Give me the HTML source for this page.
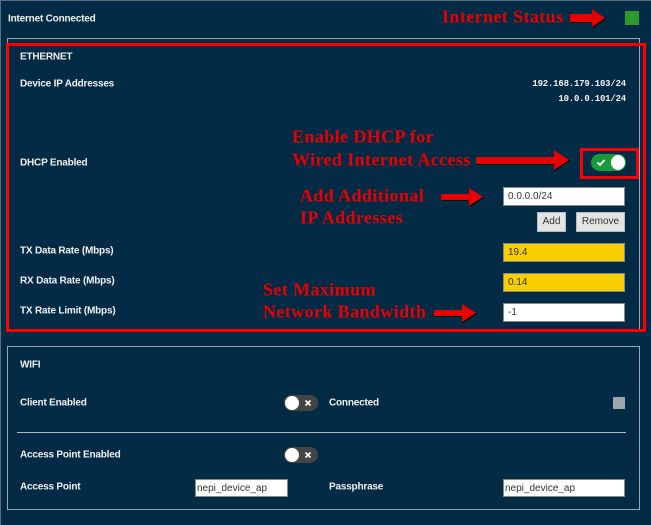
<!DOCTYPE html>
<html><head><style>
body{margin:0;width:651px;height:525px;background:#042b45;position:relative;overflow:hidden;font-family:"Liberation Sans",sans-serif;color:#fff}
.a{position:absolute;white-space:nowrap}
.l{font-size:10px;font-weight:bold;color:#f0f0f0;transform:translateY(-50%);letter-spacing:-0.2px}
.r{font-family:"Liberation Serif",serif;font-weight:bold;color:#e80000;font-size:18px;letter-spacing:0.4px;transform:translateY(-50%)}
.in{position:absolute;background:#fff;border:1px solid #888;box-sizing:border-box;font-size:10px;color:#333;padding-left:4px;line-height:17px}
.y{background:#f7ce00}
.btn{position:absolute;background:#e4e4e4;border:1px solid #bbb;box-sizing:border-box;font-size:10px;color:#333;text-align:center;line-height:18px}
.box{position:absolute;border:1px solid #9aa7b0}
.red{position:absolute;border:3px solid #f00;box-sizing:border-box}
</style></head><body>
<div class="a" style="left:0;top:0;width:1px;height:525px;background:#5a7080"></div>
<div class="a" style="left:0;top:0;width:651px;height:1px;background:#5a7080"></div>
<div class="a l" style="left:8px;top:19px">Internet Connected</div>
<div class="a r" style="left:442px;top:17px">Internet Status</div>
<svg class="a" style="left:568px;top:7px" width="40" height="22"><polygon points="2,7 24,7 24,2 37,11 24,20 24,15 2,15" fill="#000" transform="translate(1,1)"/><polygon points="2,7 24,7 24,2 37,11 24,20 24,15 2,15" fill="#e80000"/></svg>
<div class="a" style="left:625px;top:11px;width:14px;height:14px;background:#2a9a2a"></div>

<div class="box" style="left:7px;top:38px;width:631px;height:292px"></div>
<div class="red" style="left:6px;top:43px;width:640px;height:289px"></div>
<div class="a l" style="left:20px;top:57px">ETHERNET</div>
<div class="a l" style="left:20px;top:84px">Device IP Addresses</div>
<div class="a l" style="right:25px;top:84px;font-family:'Liberation Mono',monospace;font-size:9px">192.168.179.103/24</div>
<div class="a l" style="right:25px;top:99px;font-family:'Liberation Mono',monospace;font-size:9px">10.0.0.101/24</div>
<div class="a r" style="left:292px;top:137px">Enable DHCP for</div>
<div class="a r" style="left:292px;top:160px">Wired Internet Access</div>
<svg class="a" style="left:474px;top:148px" width="100" height="26"><polygon points="2,9 80,9 80,2 95,12 80,22 80,16 2,16" fill="#000" transform="translate(1,1)"/><polygon points="2,9 80,9 80,2 95,12 80,22 80,16 2,16" fill="#e80000"/></svg>
<div class="red" style="left:580px;top:148px;width:59px;height:31px"></div>
<div class="a" style="left:591px;top:154px;width:35px;height:17px;border-radius:9px;background:#1a9a3a"></div>
<div class="a" style="left:611px;top:155px;width:14px;height:15px;border-radius:50%;background:#fff"></div>
<svg class="a" style="left:596px;top:158px" width="10" height="9"><path d="M1.5 4.5 L4 7 L8.5 2" stroke="#fff" stroke-width="1.8" fill="none"/></svg>
<div class="a l" style="left:20px;top:163px">DHCP Enabled</div>
<div class="a r" style="left:300px;top:196px">Add Additional</div>
<div class="a r" style="left:300px;top:218px">IP Addresses</div>
<svg class="a" style="left:439px;top:186px" width="50" height="24"><polygon points="2,8 30,8 30,2 44,11 30,20 30,14 2,14" fill="#000" transform="translate(1,1)"/><polygon points="2,8 30,8 30,2 44,11 30,20 30,14 2,14" fill="#e80000"/></svg>
<div class="in" style="left:503px;top:187px;width:122px;height:19px">0.0.0.0/24</div>
<div class="btn" style="left:537px;top:212px;width:29px;height:20px">Add</div>
<div class="btn" style="left:576px;top:212px;width:49px;height:20px">Remove</div>
<div class="a l" style="left:20px;top:251px">TX Data Rate (Mbps)</div>
<div class="in y" style="left:503px;top:243px;width:122px;height:19px">19.4</div>
<div class="a l" style="left:20px;top:281px">RX Data Rate (Mbps)</div>
<div class="in y" style="left:503px;top:273px;width:122px;height:19px">0.14</div>
<div class="a r" style="left:263px;top:290px">Set Maximum</div>
<div class="a r" style="left:263px;top:312px">Network Bandwidth</div>
<svg class="a" style="left:432px;top:302px" width="50" height="24"><polygon points="2,8 30,8 30,2 44,11 30,20 30,14 2,14" fill="#000" transform="translate(1,1)"/><polygon points="2,8 30,8 30,2 44,11 30,20 30,14 2,14" fill="#e80000"/></svg>
<div class="a l" style="left:20px;top:311px">TX Rate Limit (Mbps)</div>
<div class="in" style="left:503px;top:303px;width:122px;height:19px">-1</div>

<div class="box" style="left:7px;top:346px;width:631px;height:162px"></div>
<div class="a l" style="left:20px;top:365px">WIFI</div>
<div class="a l" style="left:20px;top:403px">Client Enabled</div>
<div class="a" style="left:284px;top:395px;width:34px;height:16px;border-radius:8px;background:#444"></div>
<div class="a" style="left:285px;top:396px;width:14px;height:14px;border-radius:50%;background:#fff"></div>
<svg class="a" style="left:304px;top:399px" width="8" height="8"><path d="M1.5 1.5 L6.5 6.5 M6.5 1.5 L1.5 6.5" stroke="#fff" stroke-width="1.6"/></svg>
<div class="a l" style="left:329px;top:403px">Connected</div>
<div class="a" style="left:613px;top:397px;width:12px;height:12px;background:#a0a4ac"></div>
<div class="a" style="left:17px;top:432px;width:609px;height:1px;background:#b0b8c0"></div>
<div class="a l" style="left:20px;top:455px">Access Point Enabled</div>
<div class="a" style="left:284px;top:447px;width:34px;height:16px;border-radius:8px;background:#444"></div>
<div class="a" style="left:285px;top:448px;width:14px;height:14px;border-radius:50%;background:#fff"></div>
<svg class="a" style="left:304px;top:451px" width="8" height="8"><path d="M1.5 1.5 L6.5 6.5 M6.5 1.5 L1.5 6.5" stroke="#fff" stroke-width="1.6"/></svg>
<div class="a l" style="left:20px;top:487px">Access Point</div>
<div class="in" style="left:195px;top:479px;width:93px;height:18px;padding-left:1px">nepi_device_ap</div>
<div class="a l" style="left:329px;top:487px">Passphrase</div>
<div class="in" style="left:503px;top:479px;width:122px;height:18px;padding-left:1px">nepi_device_ap</div>
</body></html>
